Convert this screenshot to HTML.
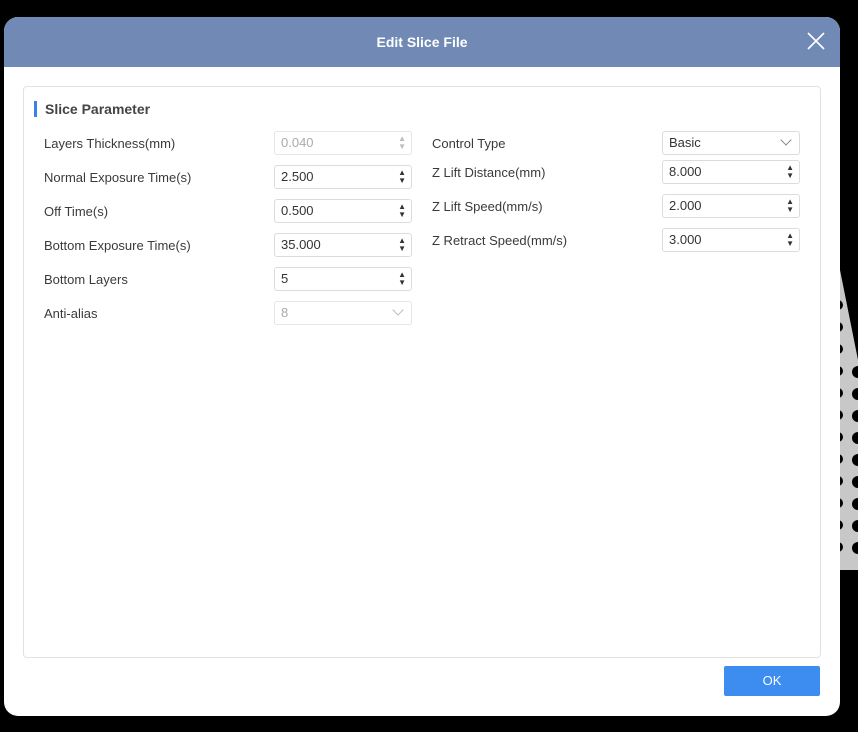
<!DOCTYPE html>
<html><head><style>
body{margin:0;width:858px;height:732px;background:#000;position:relative;overflow:hidden;font-family:"Liberation Sans",sans-serif;font-size:13px;color:#333}
.dlg{position:absolute;left:4px;top:17px;width:836px;height:699px;background:#fff;border-radius:14px;overflow:hidden}
.hd{height:50px;background:#718ab5;color:#fff;font-weight:bold;font-size:14px;text-align:center;line-height:50px}
.x{position:absolute;right:14px;top:14px;width:20px;height:20px}
.pn{position:absolute;left:19px;top:69px;width:796px;height:570px;border:1px solid #e2e2e2;border-radius:4px}
.tt{position:absolute;left:10px;top:14px;font-size:14px;font-weight:bold;color:#444;padding-left:8px;border-left:3px solid #3b82e8;line-height:16px}
.l{position:absolute;font-size:13px;color:#3a3a3a}
.f{position:absolute;width:138px;height:24px;border:1px solid #dcdcdc;border-radius:3px;box-sizing:border-box;padding-left:6px;line-height:22px;font-size:13px}
.f.d{color:#aaa;border-color:#e6e6e6}
.sp{position:absolute;right:5px;top:3px;font-size:8px;line-height:8px;color:#333}
.f.d .sp{color:#bbb}
.ch{position:absolute;right:9px;top:4px;width:7px;height:7px;border-right:1px solid #888;border-bottom:1px solid #888;transform:rotate(45deg)}
.ok{position:absolute;left:720px;top:649px;width:96px;height:30px;background:#3d8cf0;color:#fff;text-align:center;line-height:30px;font-size:13px;border-radius:2px}
</style></head><body>
<svg style="position:absolute;left:838px;top:260px" width="20" height="320">
<polygon points="0,0 20,100 20,310 0,310" fill="#c8c8c8"/>
<g fill="#000">
<circle cx="0" cy="45" r="5"/><circle cx="0" cy="67" r="5"/><circle cx="0" cy="89" r="5"/><circle cx="0" cy="111" r="5"/><circle cx="0" cy="133" r="5"/><circle cx="0" cy="155" r="5"/><circle cx="0" cy="177" r="5"/><circle cx="0" cy="199" r="5"/><circle cx="0" cy="221" r="5"/><circle cx="0" cy="243" r="5"/><circle cx="0" cy="265" r="5"/><circle cx="0" cy="287" r="5"/>
<circle cx="20" cy="112" r="6"/><circle cx="20" cy="134" r="6"/><circle cx="20" cy="156" r="6"/><circle cx="20" cy="178" r="6"/><circle cx="20" cy="200" r="6"/><circle cx="20" cy="222" r="6"/><circle cx="20" cy="244" r="6"/><circle cx="20" cy="266" r="6"/><circle cx="20" cy="288" r="6"/>
</g></svg>
<div class="dlg">
<div class="hd">Edit Slice File</div>
<svg class="x" viewBox="0 0 20 20"><path d="M2 2L18 18M18 2L2 18" stroke="#fff" stroke-width="1.6"/></svg>
<div class="pn">
<div class="tt">Slice Parameter</div>
<div class="l" style="left:20px;top:49px">Layers Thickness(mm)</div>
<div class="f d" style="left:250px;top:44px">0.040<span class="sp">▲<br>▼</span></div>
<div class="l" style="left:20px;top:83px">Normal Exposure Time(s)</div>
<div class="f" style="left:250px;top:78px">2.500<span class="sp">▲<br>▼</span></div>
<div class="l" style="left:20px;top:117px">Off Time(s)</div>
<div class="f" style="left:250px;top:112px">0.500<span class="sp">▲<br>▼</span></div>
<div class="l" style="left:20px;top:151px">Bottom Exposure Time(s)</div>
<div class="f" style="left:250px;top:146px">35.000<span class="sp">▲<br>▼</span></div>
<div class="l" style="left:20px;top:185px">Bottom Layers</div>
<div class="f" style="left:250px;top:180px">5<span class="sp">▲<br>▼</span></div>
<div class="l" style="left:20px;top:219px">Anti-alias</div>
<div class="f d" style="left:250px;top:214px">8<span class="ch" style="border-color:#bbb"></span></div>
<div class="l" style="left:408px;top:49px">Control Type</div>
<div class="f" style="left:638px;top:44px">Basic<span class="ch"></span></div>
<div class="l" style="left:408px;top:78px">Z Lift Distance(mm)</div>
<div class="f" style="left:638px;top:73px">8.000<span class="sp">▲<br>▼</span></div>
<div class="l" style="left:408px;top:112px">Z Lift Speed(mm/s)</div>
<div class="f" style="left:638px;top:107px">2.000<span class="sp">▲<br>▼</span></div>
<div class="l" style="left:408px;top:146px">Z Retract Speed(mm/s)</div>
<div class="f" style="left:638px;top:141px">3.000<span class="sp">▲<br>▼</span></div>
</div>
<div class="ok">OK</div>
</div>
</body></html>
